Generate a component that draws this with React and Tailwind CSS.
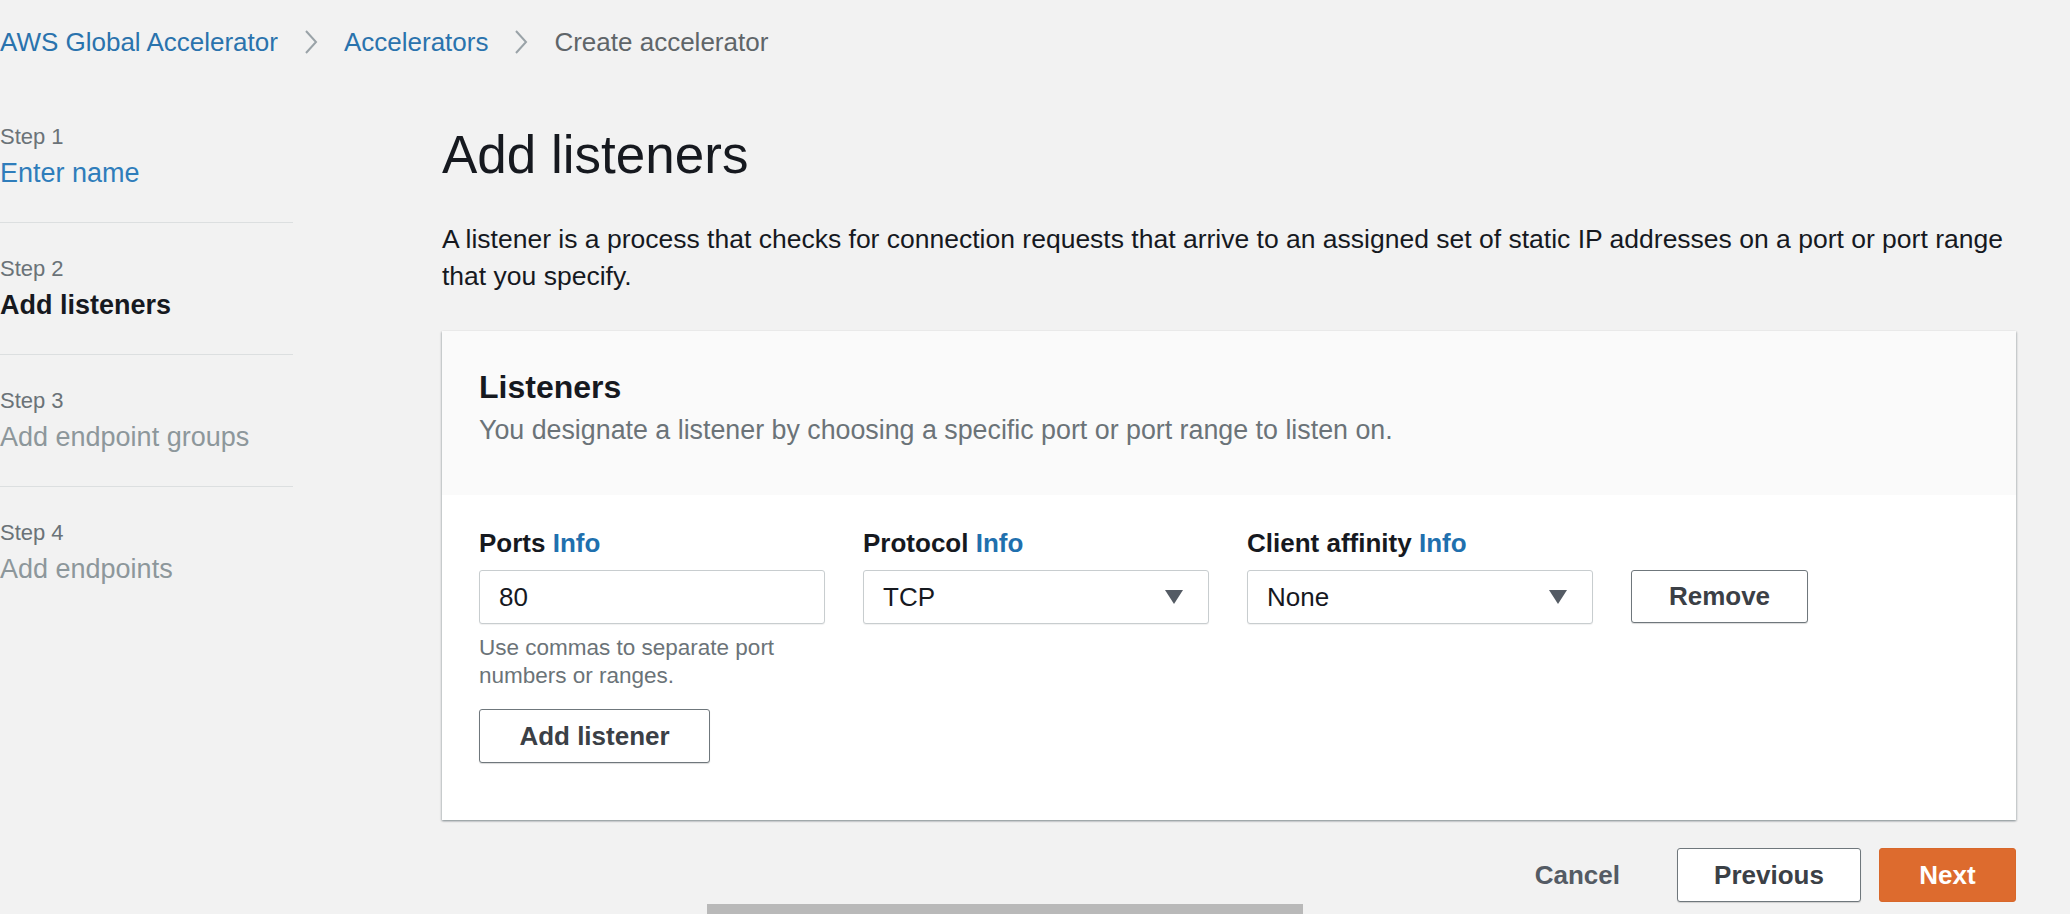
import React from "react";

const font = { fontFamily: '"Liberation Sans", Arial, sans-serif' };

function Chevron() {
  return (
    <svg width="16" height="26" viewBox="0 0 16 26" className="mx-[25px]">
      <polyline points="3,2 13,13 3,24" fill="none" stroke="#9aa3a8" strokeWidth="2" />
    </svg>
  );
}

function Caret() {
  return (
    <svg width="18" height="14" viewBox="0 0 18 14">
      <polygon points="0,0 18,0 9,14" fill="#545b64" />
    </svg>
  );
}

function NavItem({ step, name, nameClass, last }) {
  return (
    <div className={`${last ? "" : "border-b border-[#dcdfe0] pb-[32px]"}`}>
      <div className="text-[22px] leading-[28px] text-[#6b7378]">{step}</div>
      <div className={`mt-[5px] text-[27px] leading-[34px] ${nameClass}`}>{name}</div>
    </div>
  );
}

export default function App() {
  return (
    <div style={font} className="relative h-[914px] w-[2070px] overflow-hidden bg-[#f2f2f2] text-[#16191f]">
      {/* Breadcrumb */}
      <div className="flex h-[84px] items-center text-[26px] leading-[32px]">
        <span className="text-[#2a73ad]">AWS Global Accelerator</span>
        <Chevron />
        <span className="text-[#2a73ad]">Accelerators</span>
        <Chevron />
        <span className="text-[#5f6569]">Create accelerator</span>
      </div>

      <div className="flex">
        {/* Left nav */}
        <div className="flex w-[293px] shrink-0 flex-col gap-[32px] pt-[39px]">
          <NavItem step="Step 1" name="Enter name" nameClass="text-[#2f7dbb]" />
          <NavItem step="Step 2" name="Add listeners" nameClass="font-bold text-[#16191f]" />
          <NavItem step="Step 3" name="Add endpoint groups" nameClass="text-[#8d979b]" />
          <NavItem step="Step 4" name="Add endpoints" nameClass="text-[#8d979b]" last />
        </div>

        {/* Main */}
        <div className="ml-[149px] w-[1574px] pt-[41px]">
          <h1 className="text-[53px] font-normal leading-[60px] text-[#16191f]">Add listeners</h1>
          <p className="mt-[36px] text-[26.5px] leading-[37px] text-[#16191f]">
            A listener is a process that checks for connection requests that arrive to an assigned set of static IP
            addresses on a port or port range that you specify.
          </p>

          {/* Card */}
          <div className="mt-[36px] bg-white shadow-[0_1px_2px_0_rgba(0,28,36,0.3),1px_1px_2px_0_rgba(0,28,36,0.12),-1px_1px_2px_0_rgba(0,28,36,0.12)]">
            <div className="bg-[#fafafa] px-[37px] pt-[37px] pb-[48px]">
              <div className="text-[32px] font-bold leading-[38px] text-[#16191f]">Listeners</div>
              <div className="mt-[7px] text-[26.8px] leading-[34px] text-[#6b7378]">
                You designate a listener by choosing a specific port or port range to listen on.
              </div>
            </div>

            <div className="flex gap-[38px] px-[37px] pt-[32px] pb-[57px]">
              {/* Ports */}
              <div className="w-[346px]">
                <div className="text-[26px] font-bold leading-[32px] text-[#16191f]">
                  Ports <span className="text-[#1f70ae]">Info</span>
                </div>
                <div className="mt-[11px] flex h-[54px] items-center rounded-[3px] border border-[#c8cdcf] bg-white pl-[19px] text-[26px] text-[#16191f] shadow-[0_1px_1px_rgba(0,0,0,0.06)]">
                  80
                </div>
                <div className="mt-[10px] text-[22.5px] leading-[28px] text-[#6b7378]">
                  Use commas to separate port
                  <br />
                  numbers or ranges.
                </div>
                <button className="mt-[19px] flex h-[54px] w-[231px] items-center justify-center rounded-[3px] border border-[#6f777c] bg-white text-[26px] font-bold text-[#3b4046] shadow-[0_1px_1px_rgba(0,0,0,0.15)]">
                  Add listener
                </button>
              </div>

              {/* Protocol */}
              <div className="w-[346px]">
                <div className="text-[26px] font-bold leading-[32px] text-[#16191f]">
                  Protocol <span className="text-[#1f70ae]">Info</span>
                </div>
                <div className="mt-[11px] flex h-[54px] items-center justify-between rounded-[3px] border border-[#c8cdcf] bg-white pl-[19px] pr-[25px] text-[26px] text-[#16191f] shadow-[0_1px_1px_rgba(0,0,0,0.06)]">
                  <span>TCP</span>
                  <Caret />
                </div>
              </div>

              {/* Client affinity */}
              <div className="w-[346px]">
                <div className="text-[26px] font-bold leading-[32px] text-[#16191f]">
                  Client affinity <span className="text-[#1f70ae]">Info</span>
                </div>
                <div className="mt-[11px] flex h-[54px] items-center justify-between rounded-[3px] border border-[#c8cdcf] bg-white pl-[19px] pr-[25px] text-[26px] text-[#16191f] shadow-[0_1px_1px_rgba(0,0,0,0.06)]">
                  <span>None</span>
                  <Caret />
                </div>
              </div>

              {/* Remove */}
              <div>
                <button className="mt-[43px] flex h-[53px] w-[177px] items-center justify-center rounded-[3px] border border-[#6f777c] bg-white text-[26px] font-bold text-[#3b4046] shadow-[0_1px_1px_rgba(0,0,0,0.15)]">
                  Remove
                </button>
              </div>
            </div>
          </div>

          {/* Footer */}
          <div className="mt-[28px] flex items-center justify-end gap-[18px]">
            <button className="flex h-[54px] items-center px-[39px] text-[26px] font-bold text-[#545b64]">Cancel</button>
            <button className="flex h-[54px] w-[184px] items-center justify-center rounded-[3px] border border-[#6f777c] bg-white text-[26px] font-bold text-[#3b4046] shadow-[0_1px_1px_rgba(0,0,0,0.15)]">
              Previous
            </button>
            <button className="flex h-[54px] w-[137px] items-center justify-center rounded-[3px] border border-[#d8682b] bg-[#dd6b2e] text-[26px] font-bold text-white">
              Next
            </button>
          </div>
        </div>
      </div>

      {/* scrollbar thumb */}
      <div className="absolute bottom-0 left-[707px] h-[10px] w-[596px] bg-[#b9b9b9]" />
    </div>
  );
}
